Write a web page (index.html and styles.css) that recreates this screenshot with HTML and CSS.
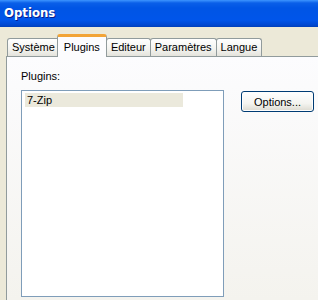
FILE: index.html
```html
<!DOCTYPE html>
<html>
<head>
    <title>Options</title>
    <link rel="stylesheet" href="styles.css">
</head>
<body>
    <div class="window">
        <div class="titlebar">Options</div>

        <div class="tabs">
            <div class="tab">Système</div>
            <div class="tab active">Plugins</div>
            <div class="tab">Editeur</div>
            <div class="tab">Paramètres</div>
            <div class="tab">Langue</div>
        </div>

        <div class="panel">
            <div class="plugins-col">
                <div class="label">Plugins:</div>
                <div class="listbox">
                    <div class="list-item selected">7-Zip</div>
                </div>
            </div>
            <div class="buttons-col">
                <button class="btn">Options...</button>
            </div>
        </div>
    </div>
</body>
</html>
```

FILE: styles.css
```css
body {
    margin: 0;
    font-family: "Liberation Sans", Arial, sans-serif;
    font-size: 11px;
    color: #000;
    background-color: #ece9d8;
    overflow: hidden;
}

.window {
    width: 318px;
    height: 300px;
    display: flex;
    flex-direction: column;
}

.titlebar {
    height: 27px;
    line-height: 25px;
    padding-left: 4px;
    color: #fff;
    font-family: "DejaVu Sans Condensed", "DejaVu Sans", sans-serif;
    font-weight: bold;
    font-size: 13px;
    background: linear-gradient(#3d95ff 0, #0a5fe8 3px, #0055e5 8px, #0055ea 20px, #0047d0 25px, #003eb8 27px);
    text-shadow: 1px 1px 0 #0a1e8c;
}

/* Tab strip */
.tabs {
    display: flex;
    align-items: flex-end;
    padding: 8px 0 0 7px;
    height: 21px;
    position: relative;
    z-index: 1;
}

.tab {
    height: 17px;
    line-height: 17px;
    padding: 0 4px;
    margin-right: -1px;
    border: 1px solid #919b9c;
    border-bottom: none;
    border-radius: 3px 3px 0 0;
    background: linear-gradient(#ffffff, #f3f3ef 60%, #e4e3dc);
}

.tab.active {
    height: 20px;
    line-height: 20px;
    margin: 0 -1px -1px -2px;
    padding: 0 6px;
    background: #fcfcfe;
    border-top: 3px solid #f2a437;
    position: relative;
    z-index: 2;
}

/* Page content */
.panel {
    flex: 1;
    margin-left: 6px;
    border-top: 1px solid #919b9c;
    border-left: 1px solid #919b9c;
    background: linear-gradient(#fcfcfe, #f4f3ee);
    display: flex;
    padding: 13px 0 0 14px;
}

.label {
    height: 20px;
}

.listbox {
    width: 198px;
    height: 203px;
    border: 1px solid #7f9db9;
    background-color: #fff;
    padding: 2px 0 0 3px;
}

.list-item {
    width: 156px;
    height: 14px;
    line-height: 14px;
    padding-left: 2px;
}

.list-item.selected {
    background-color: #ebe9dc;
}

.buttons-col {
    padding: 21px 0 0 17px;
}

.btn {
    width: 73px;
    height: 21px;
    padding: 0;
    font-family: "Liberation Sans", Arial, sans-serif;
    font-size: 11px;
    color: #000;
    border: 1px solid #003c74;
    border-radius: 3px;
    background: linear-gradient(#ffffff, #f4f4f0 60%, #dcdad0);
    box-shadow: inset 0 0 0 1px #fdfdfd;
}
```
